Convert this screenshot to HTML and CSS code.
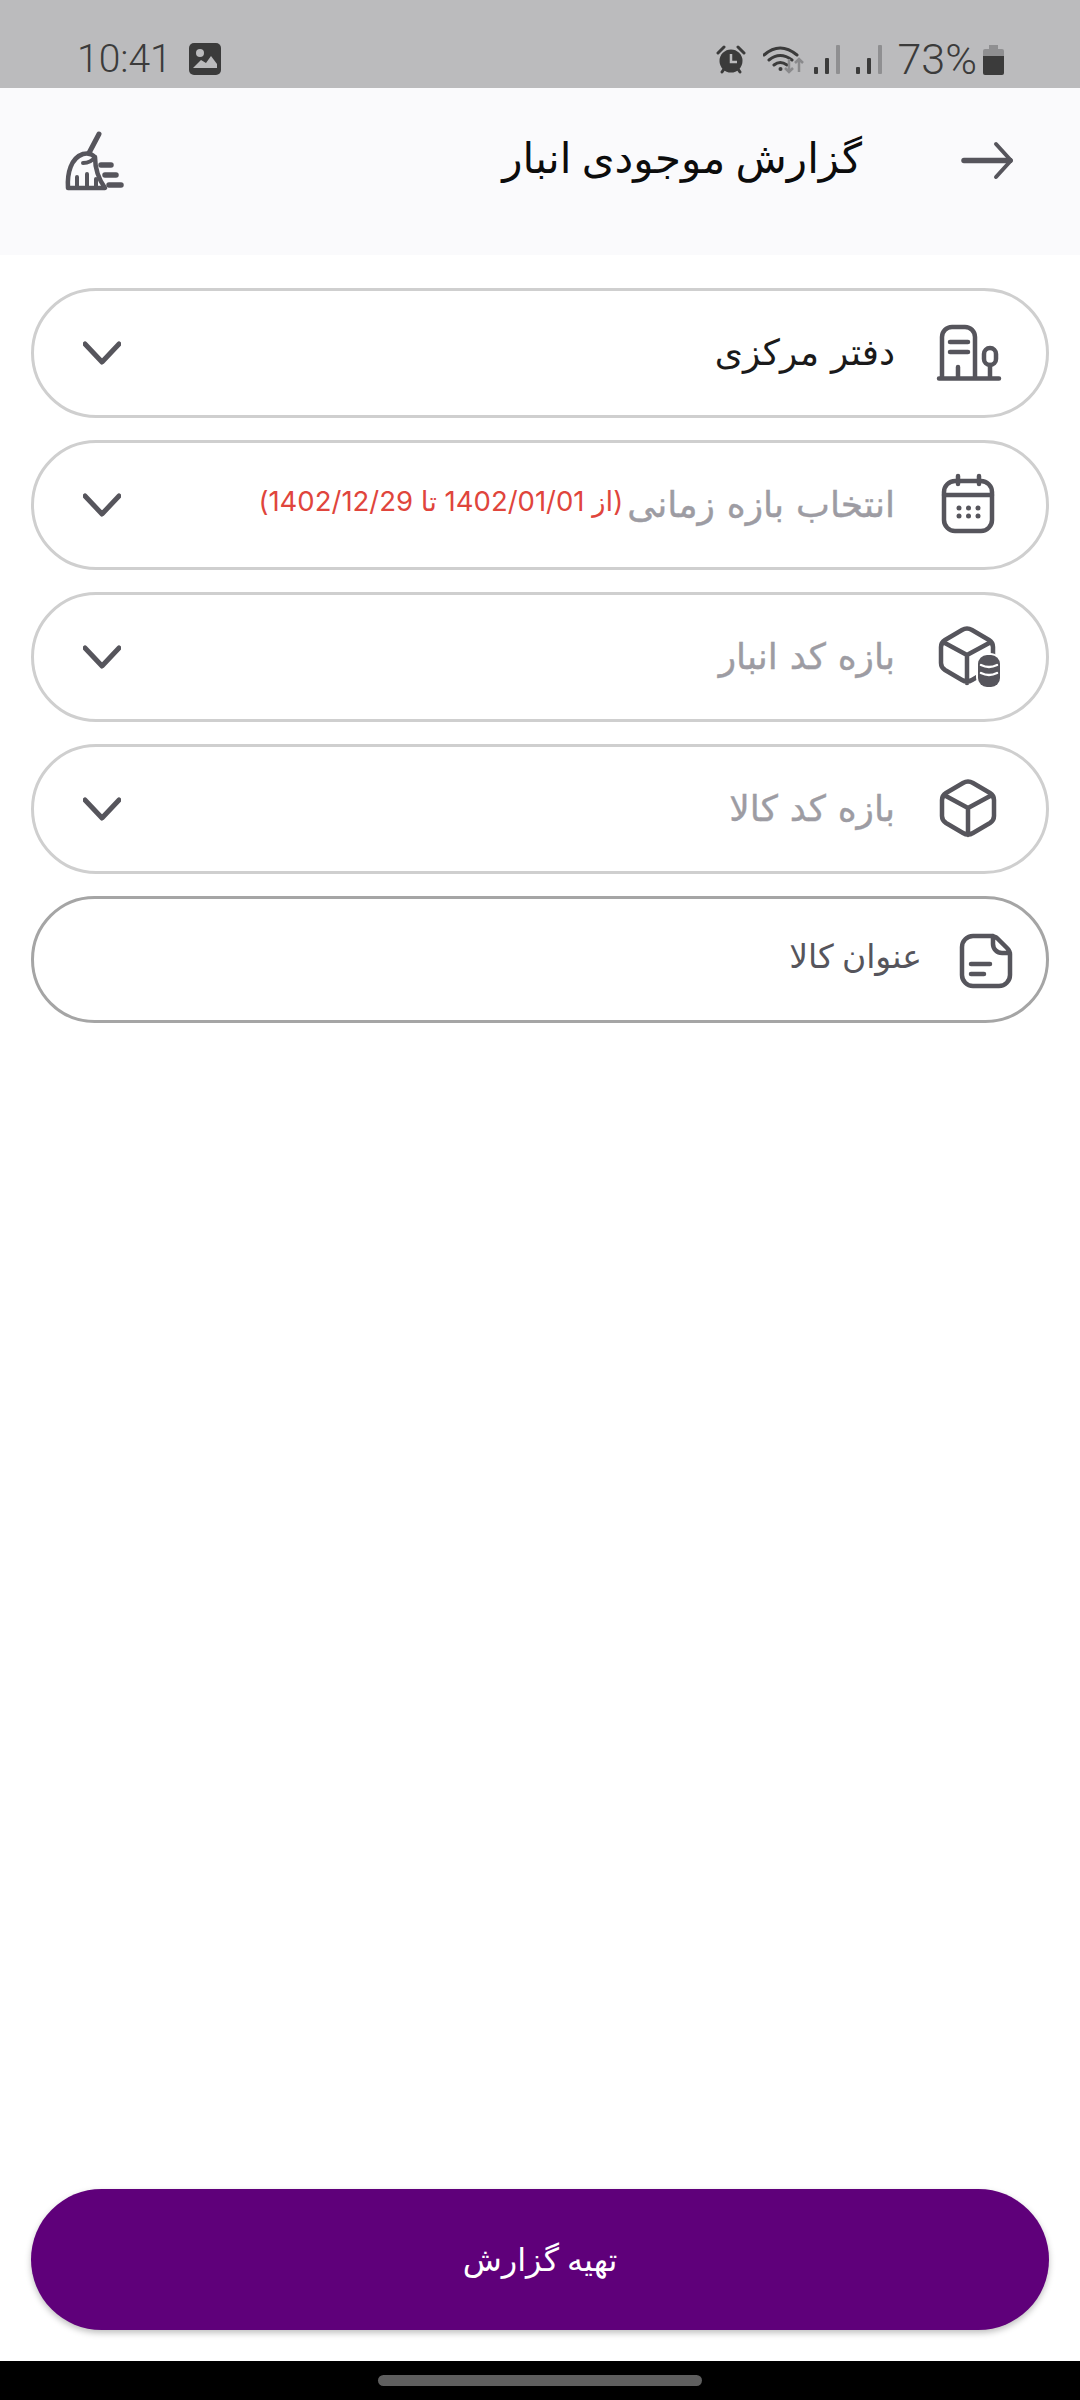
FILE: index.html
```html
<!DOCTYPE html>
<html lang="fa" dir="rtl">
<head>
    <meta charset="UTF-8">
    <meta name="viewport" content="width=device-width, initial-scale=1.0">
    <title>گزارش موجودی انبار</title>
    <link rel="stylesheet" href="styles.css">
</head>
<body>
    <div class="status-bar" dir="ltr">
        <div class="status-left">
            <span class="clock">10:41</span>
            <svg class="st-image" viewBox="0 0 32 32"><rect width="32" height="32" rx="5" fill="#3b3b3b"/><circle cx="11" cy="10" r="4" fill="#bbbbbd"/><path d="M4 25l8-8 5 3 5-7 6 8v4H4z" fill="#bbbbbd"/></svg>
        </div>
        <div class="status-right">
            <svg class="st-alarm" viewBox="0 0 30 29"><circle cx="15" cy="16" r="11.500" fill="#3b3b3b"/><path d="M2 8l6-6M28 8l-6-6M6 27l2-3M24 27l-2-3" stroke="#3b3b3b" stroke-width="3" stroke-linecap="round" fill="none"/><path d="M15 9v8h6" stroke="#bbbbbd" stroke-width="2.500" fill="none"/></svg>
            <svg class="st-wifi" viewBox="0 0 41 30"><path d="M1 11q16-14 33 0M6 16q11-9 23 0M11 21q6-5 13 0" stroke="#3b3b3b" stroke-width="3" fill="none" stroke-linecap="round"/><circle cx="17.500" cy="25" r="2" fill="#3b3b3b"/><path d="M26 15v13M22 24l4 4 4-4M36 28V15M32 19l4-4 4 4" stroke="#8a8a8c" stroke-width="2.500" fill="none"/></svg>
            <svg class="st-signal" viewBox="0 0 27 30"><rect x="0" y="23" width="4" height="7" rx="1" fill="#3b3b3b"/><rect x="11" y="14" width="4" height="16" rx="1" fill="#3b3b3b"/><rect x="22" y="1" width="4" height="29" rx="1" fill="#8f8f91"/></svg>
            <svg class="st-signal" viewBox="0 0 27 30"><rect x="0" y="23" width="4" height="7" rx="1" fill="#3b3b3b"/><rect x="11" y="14" width="4" height="16" rx="1" fill="#3b3b3b"/><rect x="22" y="1" width="4" height="29" rx="1" fill="#8f8f91"/></svg>
            <span class="battery-pct">73%</span>
            <svg class="st-battery" viewBox="0 0 21 31"><path d="M6 1h9v4h4a2 2 0 0 1 2 2v5H0V7a2 2 0 0 1 2-2h4z" fill="#8f8f91"/><path d="M0 12h21v17a2 2 0 0 1-2 2H2a2 2 0 0 1-2-2z" fill="#3b3b3b"/></svg>
        </div>
    </div>

    <header class="app-header">
        <svg class="icon" viewBox="0 0 68 68"><path d="M11 33.500H57" stroke-width="5.500"/><path d="M43 17L58 33.500L43 50" stroke-width="4"/></svg>
        <h1 class="page-title">گزارش موجودی انبار</h1>
        <svg class="icon clear-btn" viewBox="0 0 68 68">
            <path d="M39 4L29 23" stroke-width="5"/>
            <path d="M8 58c-1-15 3-30 15-34q7-2 12 3q0 17 10 31z" stroke-width="4.500"/>
            <path d="M23 33q8 0 12-6M17 57V47M27 57V44M36 57V49" stroke-width="4"/>
            <path d="M41 35H51M45 45H56M49 55H61" stroke-width="5.500"/>
        </svg>
    </header>

    <main class="filters">
        <div class="filter-row">
            <svg class="icon" viewBox="0 0 68 68">
                <path d="M6 58V18a10 10 0 0 1 10-10h13a10 10 0 0 1 10 10v40M14 23H32M14 33H32M22 48V58M3 59.500H63M54 46V58"/>
                <rect x="48" y="29" width="12" height="17" rx="6"/>
            </svg>
            <span class="filter-label selected">دفتر مرکزی</span>
            <svg class="chevron" viewBox="0 0 38 24"><path d="M2 3L19 21L36 3"/></svg>
        </div>
        <div class="filter-row">
            <svg class="icon" viewBox="0 0 68 68">
                <rect x="8" y="10" width="48" height="50" rx="11"/>
                <path d="M8 24H56M22 5V13M43 5V13"/>
                <g class="icon-dots">
                    <circle cx="23" cy="37" r="2.500"/><circle cx="32.500" cy="37" r="2.500"/><circle cx="42" cy="37" r="2.500"/>
                    <circle cx="23" cy="45" r="2.500"/><circle cx="32.500" cy="45" r="2.500"/><circle cx="42" cy="45" r="2.500"/>
                </g>
            </svg>
            <span class="filter-label">انتخاب بازه زمانی</span>
            <span class="date-range">(از 1402/01/01 تا 1402/12/29)</span>
            <svg class="chevron" viewBox="0 0 38 24"><path d="M2 3L19 21L36 3"/></svg>
        </div>
        <div class="filter-row">
            <svg class="icon" viewBox="0 0 68 68">
                <path d="M26 7q5-3 10 0l17 10q4 2.500 4 7v16q0 4.500-4 7l-17 10q-5 3-10 0l-17-10q-4-2.500-4-7v-16q0-4.500 4-7zM7 19L31 32L55 19M31 32V60"/>
                <rect class="icon-solid" x="40" y="30" width="25" height="35" rx="11"/>
                <rect class="icon-fill" x="42" y="32" width="22" height="32" rx="9"/>
                <path class="icon-stripe" d="M45 42q8 4 16 0M45 50q8 4 16 0"/>
            </svg>
            <span class="filter-label">بازه کد انبار</span>
            <svg class="chevron" viewBox="0 0 38 24"><path d="M2 3L19 21L36 3"/></svg>
        </div>
        <div class="filter-row">
            <svg class="icon" viewBox="0 0 68 68">
                <path d="M27 8q5-3 10 0l17 10q4 2.500 4 7v16q0 4.500-4 7l-17 10q-5 3-10 0l-17-10q-4-2.500-4-7v-16q0-4.500 4-7zM8 20L32 33L56 20M32 33V60"/>
            </svg>
            <span class="filter-label">بازه کد کالا</span>
            <svg class="chevron" viewBox="0 0 38 24"><path d="M2 3L19 21L36 3"/></svg>
        </div>
        <div class="filter-row text-input">
            <svg class="icon" viewBox="0 0 68 68">
                <path d="M40 10H21a11 11 0 0 0-11 11v28a11 11 0 0 0 11 11h26a11 11 0 0 0 11-11V28q0-3-3-6L46 13q-3-3-6-3zM41 10v8a9 9 0 0 0 9 9h8M19 38H38M19 48H32"/>
            </svg>
            <span class="input-label">عنوان کالا</span>
        </div>
    </main>

    <button class="report-btn">تهیه گزارش</button>

    <div class="nav-bar"><div class="nav-handle"></div></div>
</body>
</html>
```

FILE: styles.css
```css
* {
    box-sizing: border-box;
}

body {
    font-family: 'Roboto', 'DejaVu Sans', sans-serif;
    background-color: #ffffff;
    margin: 0;
    width: 1080px;
    height: 2400px;
    display: flex;
    flex-direction: column;
}

.status-bar {
    height: 88px;
    flex-shrink: 0;
    background-color: #bbbbbd;
    color: #3b3b3b;
    display: flex;
    justify-content: space-between;
    align-items: center;
    padding: 30px 76px 0 77px;
}

.status-left, .status-right {
    display: flex;
    align-items: center;
}

.clock {
    font-size: 39px;
    font-weight: 300;
    margin-right: 17px;
}

.battery-pct {
    font-size: 43px;
    font-weight: 300;
    margin: 0 6px 0 0;
}

.st-image {
    width: 32px;
    height: 32px;
}

.st-alarm {
    width: 30px;
    height: 29px;
    margin-right: 17px;
}

.st-wifi {
    width: 41px;
    height: 30px;
    margin-right: 10px;
}

.st-signal {
    width: 27px;
    height: 30px;
    margin-right: 15px;
}

.st-battery {
    width: 21px;
    height: 31px;
}

.app-header {
    height: 167px;
    flex-shrink: 0;
    background-color: #fafafc;
    display: flex;
    align-items: flex-start;
    padding: 39px 59px 0 60px;
}

.page-title {
    margin: -2px 91px 0 0;
    font-size: 42px;
    font-weight: 400;
    line-height: 68px;
    color: #0c0c0c;
}

.clear-btn {
    margin-right: auto;
    margin-top: 3px;
}

.icon {
    width: 68px;
    height: 68px;
    flex-shrink: 0;
    fill: none;
    stroke: #56555c;
    stroke-width: 4.5;
    stroke-linecap: round;
    stroke-linejoin: round;
}

.icon-dots {
    fill: #56555c;
    stroke: none;
}

.icon .icon-solid {
    fill: #ffffff;
    stroke: none;
}

.icon .icon-fill {
    fill: #56555c;
    stroke: none;
}

.icon .icon-stripe {
    stroke: #ffffff;
    stroke-width: 2.5;
}

.filters {
    flex: 1;
    display: flex;
    flex-direction: column;
    gap: 22px;
    padding: 33px 31px 0;
}

.filter-row {
    height: 130px;
    border: 3px solid #cfcfcf;
    border-radius: 65px;
    display: flex;
    align-items: center;
    padding: 0 42px 0 49px;
}

.filter-label {
    margin-right: 41px;
    font-size: 36px;
    word-spacing: 3px;
    color: #9d9ca3;
    -webkit-text-stroke: 0.4px #9d9ca3;
    white-space: nowrap;
}

.filter-label.selected {
    color: #1a1a1a;
    -webkit-text-stroke: 0;
}

.date-range {
    margin: -8px 4px 0 0;
    font-family: 'Inter', 'DejaVu Sans', sans-serif;
    font-size: 27.5px;
    color: #e0453c;
    white-space: nowrap;
}

.chevron {
    width: 38px;
    height: 24px;
    margin-right: auto;
    fill: none;
    stroke: #56555c;
    stroke-width: 5;
    stroke-linecap: round;
    stroke-linejoin: round;
}

.filter-row.text-input {
    height: 127px;
    border-color: #a5a5a5;
    border-radius: 64px;
    padding-right: 26px;
}

.input-label {
    margin-right: 30px;
    margin-top: -6px;
    font-size: 33px;
    color: #56555c;
}

.report-btn {
    flex-shrink: 0;
    height: 141px;
    margin: 0 31px 31px;
    border: none;
    border-radius: 71px;
    background-color: #5f007a;
    color: #ffffff;
    font-family: inherit;
    font-size: 32px;
    box-shadow: 0 3px 6px rgba(0, 0, 0, 0.25);
}

.nav-bar {
    height: 39px;
    flex-shrink: 0;
    background-color: #000000;
    display: flex;
    justify-content: center;
    padding-top: 14px;
}

.nav-handle {
    width: 324px;
    height: 11px;
    border-radius: 6px;
    background-color: #5f5f5f;
}
```
